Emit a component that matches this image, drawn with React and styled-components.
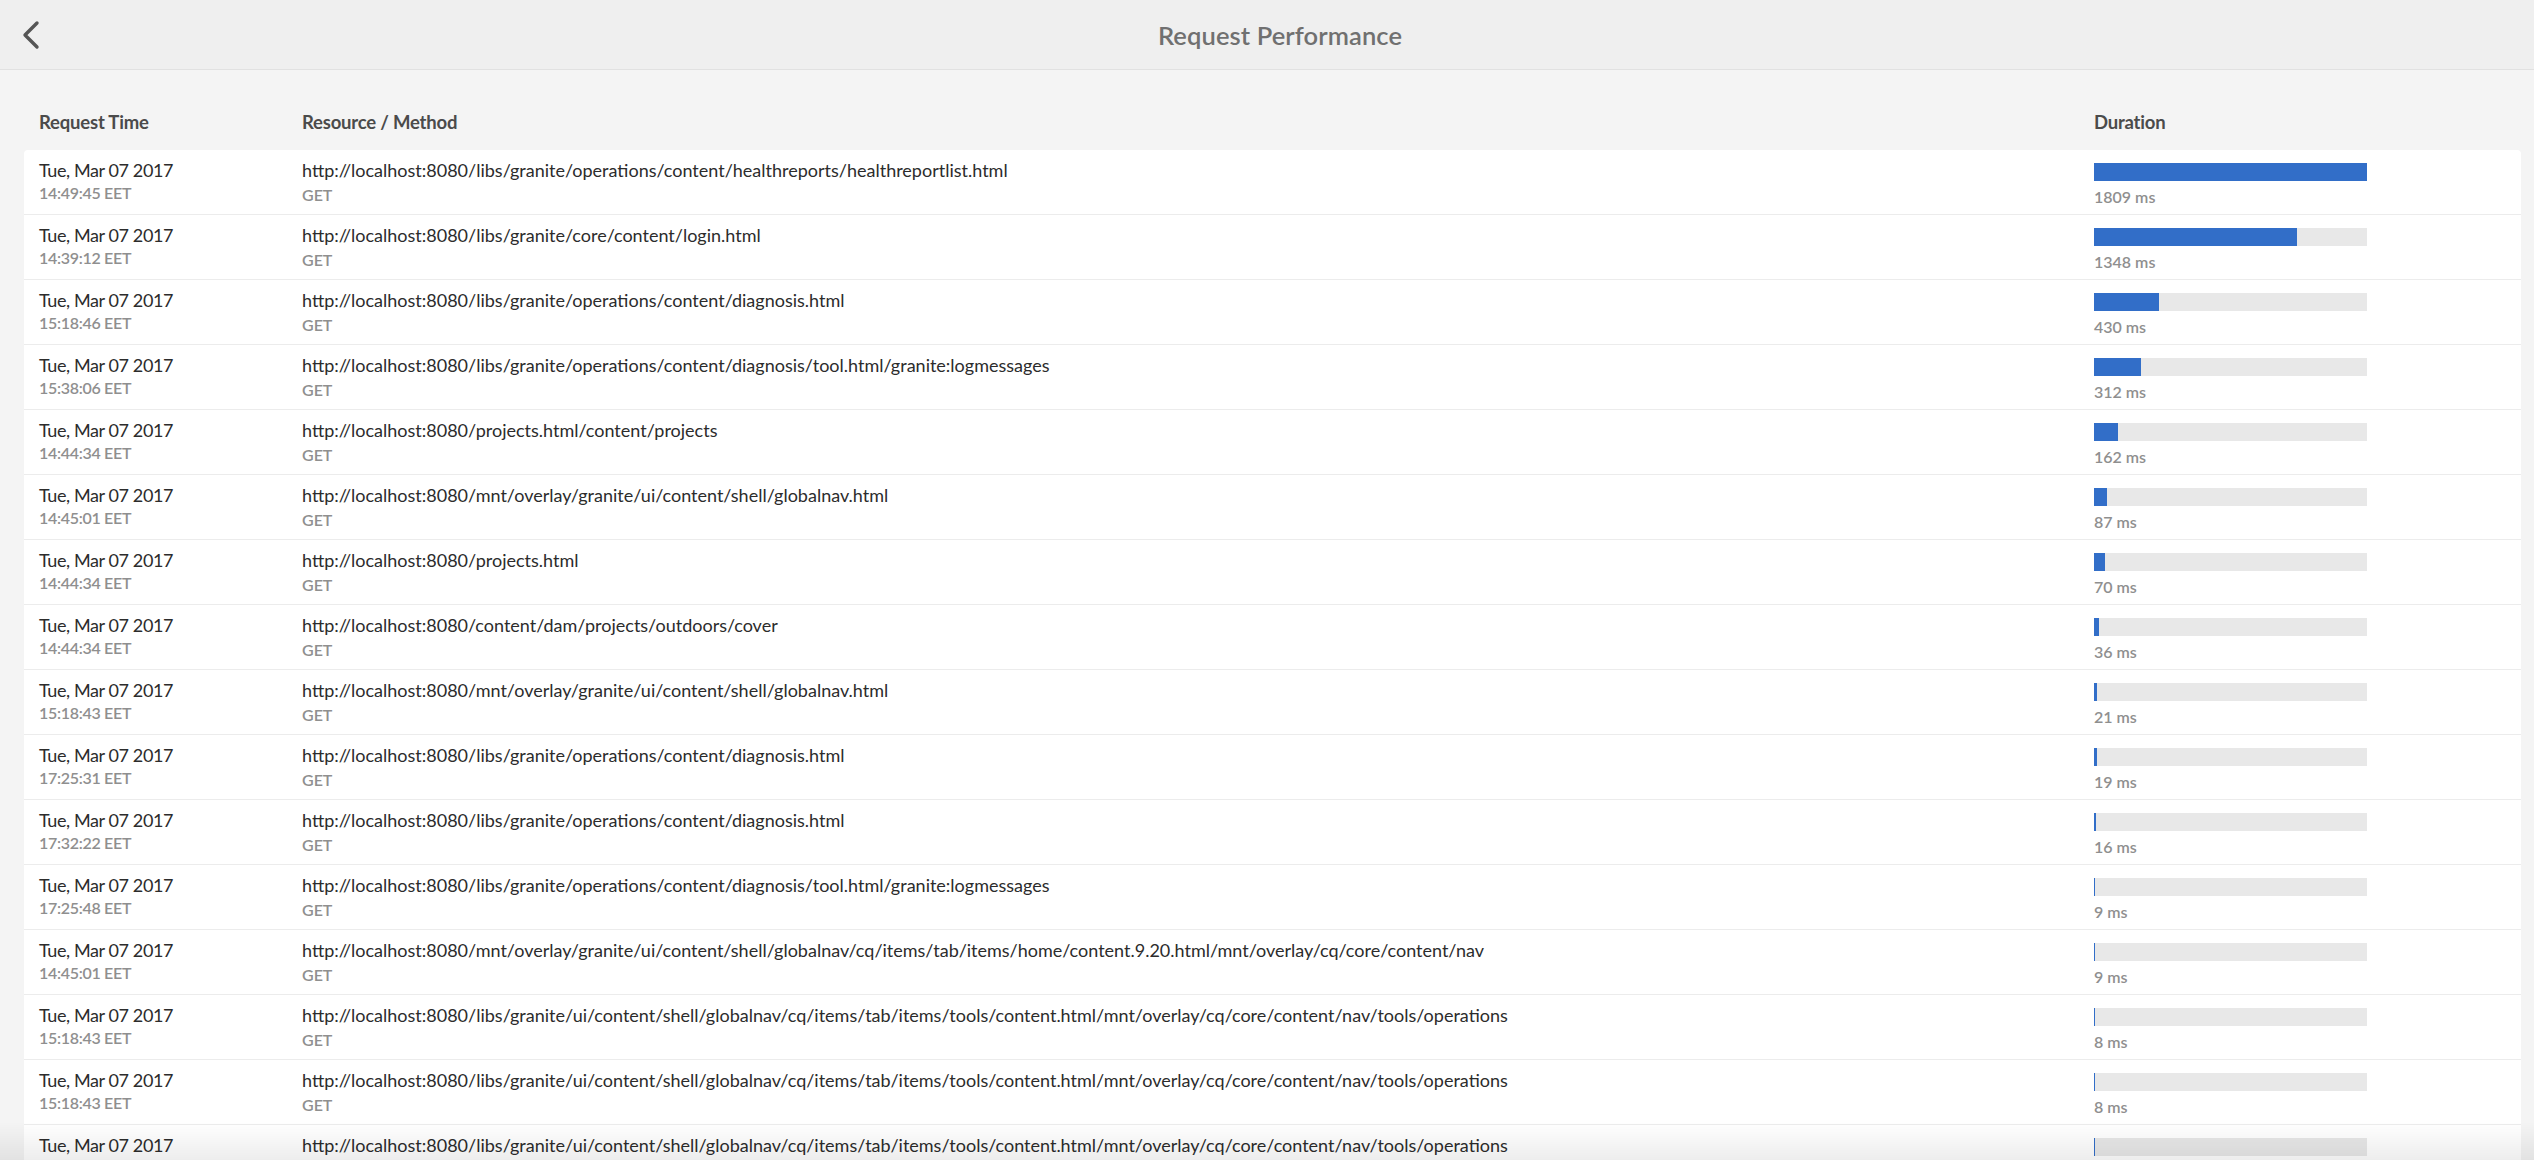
import React from 'react';
import styled, { createGlobalStyle } from 'styled-components';

const GlobalStyle = createGlobalStyle`
  html, body {
    margin: 0;
    padding: 0;
    height: 100%;
    overflow: hidden;
    background: #f4f4f4;
    font-family: Lato, 'Open Sans', sans-serif;
    color: #2c2c2c;
  }
`;

const Page = styled.div`
  min-height: 100vh;
  background: #f4f4f4;
`;

const TopBar = styled.header`
  display: grid;
  grid-template-columns: 1fr auto 1fr;
  align-items: center;
  height: 69px;
  padding-left: 26px;
  background: #efefef;
  border-bottom: 1px solid #e1e1e1;
`;

const BackButton = styled.button`
  justify-self: start;
  display: flex;
  align-items: center;
  margin-left: -6px;
  padding: 0;
  border: 0;
  background: none;
  cursor: pointer;
`;

const Title = styled.h1`
  margin: 0;
  font-size: 25.5px;
  font-weight: 600;
  color: #707070;
  letter-spacing: 0.1px;
`;

const Content = styled.main`
  padding: 0 13px 0 24px;
`;

const Columns = styled.div`
  display: grid;
  grid-template-columns: 263px 1792px 1fr;
  padding-left: 15px;
`;

const HeadRow = styled(Columns)`
  padding-top: 40px;
  padding-bottom: 16px;
`;

const HeadCell = styled.div`
  font-size: 18.5px;
  line-height: 24px;
  font-weight: 700;
  color: #4b4b4b;
  letter-spacing: -0.2px;
`;

const Card = styled.div`
  background: #fff;
  border-radius: 4px 4px 0 0;
`;

const Row = styled(Columns)`
  box-sizing: border-box;
  height: 65px;
  border-bottom: 1px solid #ececec;
`;

const Cell = styled.div`
  padding-top: 8px;
  min-width: 0;
`;

const Primary = styled.div`
  font-size: 18px;
  line-height: 24px;
  color: #2c2c2c;
  white-space: nowrap;
  letter-spacing: ${(p) => p.$tight ? '-0.4px' : '0'};
`;

const Secondary = styled.div`
  margin-top: ${(p) => p.$gap || 1}px;
  font-size: 16px;
  line-height: 20px;
  font-weight: 600;
  color: #8f8f8f;
  white-space: nowrap;
  letter-spacing: ${(p) => p.$tight ? '-0.3px' : '0'};
`;

const DurationCell = styled.div`
  padding-top: 13px;
`;

const Track = styled.div`
  width: 273px;
  height: 18px;
  background: #e8e8e8;
`;

const Fill = styled.div`
  height: 100%;
  min-width: 1px;
  background: #326ec8;
`;

const BottomFade = styled.div`
  position: fixed;
  left: 0;
  right: 0;
  bottom: 0;
  height: 38px;
  pointer-events: none;
  background: linear-gradient(to bottom, rgba(0, 0, 0, 0), rgba(0, 0, 0, 0.07));
`;

const host = 'http://localhost:8080';
const toolsOps =
  host +
  '/libs/granite/ui/content/shell/globalnav/cq/items/tab/items/tools/content.html/mnt/overlay/cq/core/content/nav/tools/operations';

const requests = [
  ['14:49:45', host + '/libs/granite/operations/content/healthreports/healthreportlist.html', 1809],
  ['14:39:12', host + '/libs/granite/core/content/login.html', 1348],
  ['15:18:46', host + '/libs/granite/operations/content/diagnosis.html', 430],
  ['15:38:06', host + '/libs/granite/operations/content/diagnosis/tool.html/granite:logmessages', 312],
  ['14:44:34', host + '/projects.html/content/projects', 162],
  ['14:45:01', host + '/mnt/overlay/granite/ui/content/shell/globalnav.html', 87],
  ['14:44:34', host + '/projects.html', 70],
  ['14:44:34', host + '/content/dam/projects/outdoors/cover', 36],
  ['15:18:43', host + '/mnt/overlay/granite/ui/content/shell/globalnav.html', 21],
  ['17:25:31', host + '/libs/granite/operations/content/diagnosis.html', 19],
  ['17:32:22', host + '/libs/granite/operations/content/diagnosis.html', 16],
  ['17:25:48', host + '/libs/granite/operations/content/diagnosis/tool.html/granite:logmessages', 9],
  [
    '14:45:01',
    host +
      '/mnt/overlay/granite/ui/content/shell/globalnav/cq/items/tab/items/home/content.9.20.html/mnt/overlay/cq/core/content/nav',
    9,
  ],
  ['15:18:43', toolsOps, 8],
  ['15:18:43', toolsOps, 8],
  ['15:18:43', toolsOps, 7],
];

const max = Math.max(...requests.map((r) => r[2]));

function ChevronLeft() {
  return (
    <svg width="22" height="30" viewBox="0 0 22 30">
      <polyline
        points="17,3 5,15 17,27"
        fill="none"
        stroke="#555"
        strokeWidth="3.4"
        strokeLinecap="round"
        strokeLinejoin="round"
      />
    </svg>
  );
}

export default function App() {
  return (
    <Page>
      <GlobalStyle />
      <TopBar>
        <BackButton aria-label="Back">
          <ChevronLeft />
        </BackButton>
        <Title>Request Performance</Title>
        <div />
      </TopBar>

      <Content>
        <HeadRow>
          <HeadCell>Request Time</HeadCell>
          <HeadCell>Resource / Method</HeadCell>
          <HeadCell>Duration</HeadCell>
        </HeadRow>

        <Card>
          {requests.map(([time, url, ms], i) => (
            <Row key={i}>
              <Cell>
                <Primary $tight>Tue, Mar 07 2017</Primary>
                <Secondary $tight>{time} EET</Secondary>
              </Cell>
              <Cell>
                <Primary>{url}</Primary>
                <Secondary $gap={3}>GET</Secondary>
              </Cell>
              <DurationCell>
                <Track>
                  <Fill style={{ width: `${(ms / max) * 100}%` }} />
                </Track>
                <Secondary $gap={6}>{ms} ms</Secondary>
              </DurationCell>
            </Row>
          ))}
        </Card>
      </Content>
      <BottomFade />
    </Page>
  );
}
